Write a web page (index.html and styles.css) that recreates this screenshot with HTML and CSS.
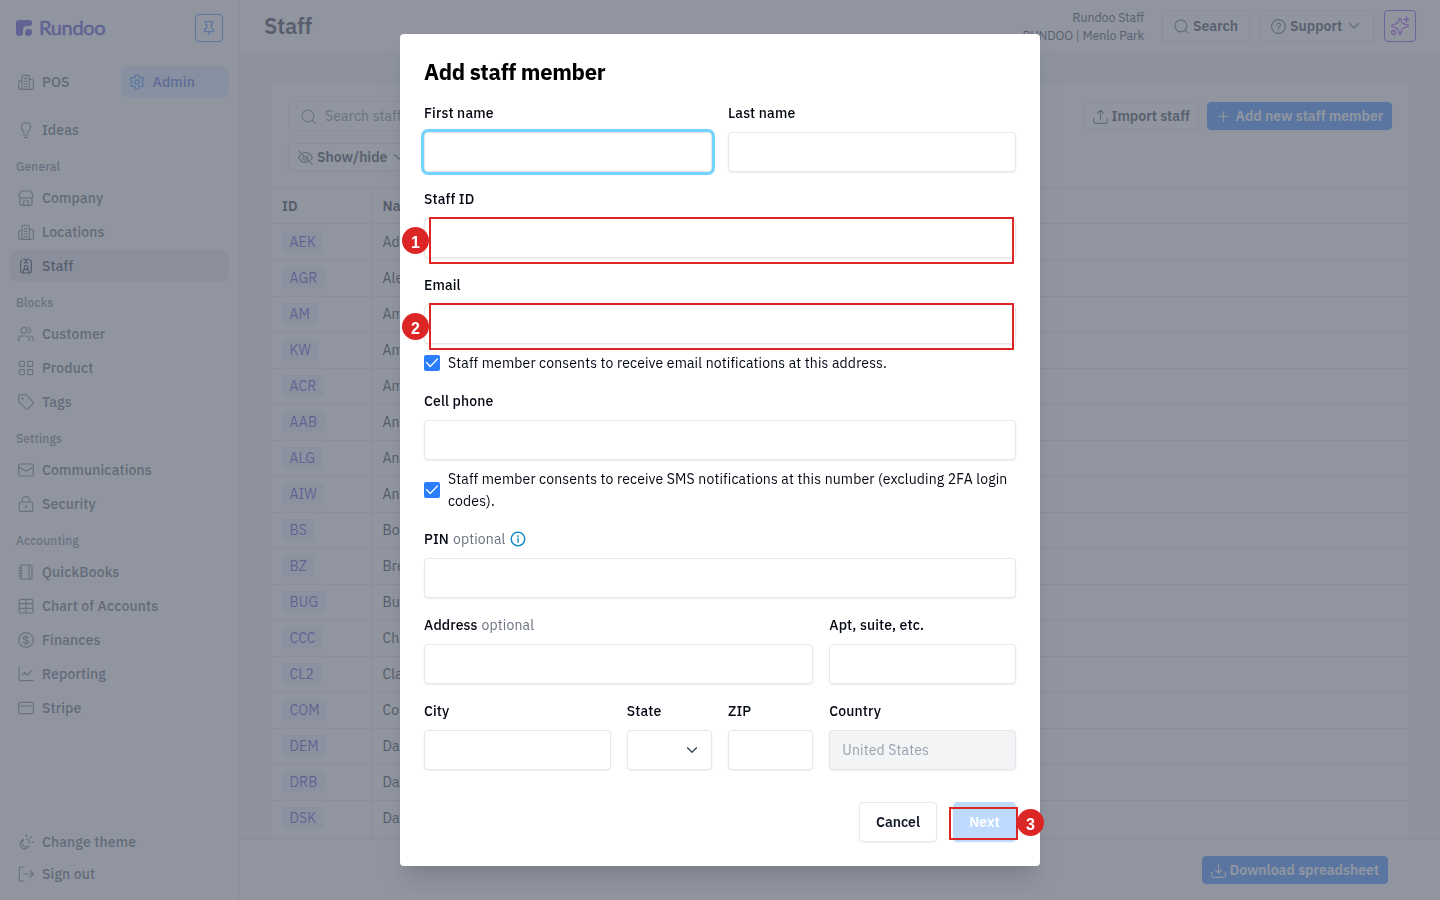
FILE: index.html
```html
<!DOCTYPE html>
<html lang="en">
<head>
<meta charset="utf-8">
<title>Add staff member</title>
<link rel="stylesheet" href="styles.css">
</head>
<body>
<div class="app">
  <aside class="sidebar">
    <div class="brand">
      <svg class="brand-mark" viewBox="0 0 16 16"><path d="M3 0h10.500a2.500 2.500 0 0 1 2.500 2.500v1a2.500 2.500 0 0 1-2.500 2.500H11a4 4 0 0 0-4 4V13a3 3 0 0 1-3 3H3a3 3 0 0 1-3-3V3a3 3 0 0 1 3-3z"/><circle cx="12.600" cy="12.500" r="3.500"/></svg>
      <span class="brand-name">Rundoo</span>
      <span class="pin"><svg viewBox="0 0 24 24"><path d="M6.500 2.500h11v3l-2 1.500v5l3.500 2.500V17.500H5v-3L8.500 12V7l-2-1.500zM12 17.500v5"/></svg></span>
    </div>
    <div class="modes">
      <a class="item"><svg viewBox="0 0 24 24"><path d="M6 23V4a2 2 0 0 1 2-2h7a2 2 0 0 1 2 2v19M1 21V12a2 2 0 0 1 2-2h3M17 8h3a3 3 0 0 1 3 3v10a2 2 0 0 1-2 2H3a2 2 0 0 1-2-2M9.500 7h4M9.500 11h4M9.500 15h4M9.500 19h4"/></svg>POS</a>
      <a class="item item-mode"><svg viewBox="0 0 24 24"><circle cx="12" cy="12" r="3.200"/><path d="M10 1.500h4l.8 3.200 2.200 1.300 3.200-1 2 3.500-2.400 2.300v2.400l2.400 2.300-2 3.500-3.200-1-2.200 1.300-.8 3.200h-4l-.8-3.200L7 18l-3.200 1-2-3.500 2.400-2.300v-2.400L1.800 8.500l2-3.500L7 6l2.200-1.300z"/></svg>Admin</a>
    </div>
    <nav class="nav">
      <a class="item"><svg viewBox="0 0 24 24"><path d="M9 17v-2.500C6.500 13 5 11 5 8a7 7 0 0 1 14 0c0 3-1.500 5-4 6.500V17M8.500 19.500h7M10 23h4"/></svg>Ideas</a>
      <h3 class="group">General</h3>
      <a class="item"><svg viewBox="0 0 24 24"><path d="M3 12v8a3 3 0 0 0 3 3h12a3 3 0 0 0 3-3v-8M5.500 1.500h13L22.500 7v2a3 3 0 0 1-5.200 2 3.500 3.500 0 0 1-5.300 0 3.500 3.500 0 0 1-5.300 0A3 3 0 0 1 1.500 9V7zM8.500 23v-6.500h7V23"/></svg>Company</a>
      <a class="item"><svg viewBox="0 0 24 24"><path d="M6 23V4a2 2 0 0 1 2-2h7a2 2 0 0 1 2 2v19M1 21V12a2 2 0 0 1 2-2h3M17 8h3a3 3 0 0 1 3 3v10a2 2 0 0 1-2 2H3a2 2 0 0 1-2-2M9.500 7h4M9.500 11h4M9.500 15h4M9.500 19h4"/></svg>Locations</a>
      <a class="item item-active"><svg viewBox="0 0 24 24"><path d="M7 3h-.5a2.500 2.500 0 0 0-2.500 2.500v14.500a2.500 2.500 0 0 0 2.500 2.500h11a2.500 2.500 0 0 0 2.500-2.500V5.500a2.500 2.500 0 0 0-2.500-2.500H17M9 1l3 3.500L15 1M9.500 7h5M7.500 22v-2a2.500 2.500 0 0 1 2.500-2.500h4a2.500 2.500 0 0 1 2.500 2.500v2"/><circle cx="12" cy="14.300" r="2.800"/></svg>Staff</a>
      <h3 class="group">Blocks</h3>
      <a class="item"><svg viewBox="0 0 24 24"><circle cx="9" cy="6.500" r="4.500"/><path d="M1 22v-2a5 5 0 0 1 5-5h6a5 5 0 0 1 5 5v2M15.500 2.200a4.500 4.500 0 0 1 0 8.600M19 15.300a5 5 0 0 1 4 4.700v2"/></svg>Customer</a>
      <a class="item"><svg viewBox="0 0 24 24"><rect x="2" y="2" width="7.500" height="7.500" rx="1"/><rect x="14.500" y="2" width="7.500" height="7.500" rx="1"/><rect x="2" y="14.500" width="7.500" height="7.500" rx="1"/><rect x="14.500" y="14.500" width="7.500" height="7.500" rx="1"/></svg>Product</a>
      <a class="item"><svg viewBox="0 0 24 24"><path d="M1 3.500V11l11 11.300a2 2 0 0 0 2.800 0l7.700-7.700a2 2 0 0 0 0-2.800L12 1H3.500A2.500 2.500 0 0 0 1 3.500z"/><circle cx="6.800" cy="6.800" r=".8"/></svg>Tags</a>
      <h3 class="group">Settings</h3>
      <a class="item"><svg viewBox="0 0 24 24"><rect x="1" y="3" width="22" height="18" rx="2"/><path d="M1 7l9.500 6a3 3 0 0 0 3 0L23 7"/></svg>Communications</a>
      <a class="item"><svg viewBox="0 0 24 24"><rect x="2" y="9" width="20" height="14" rx="2"/><path d="M6.500 9V6.500a5.500 5.500 0 0 1 11 0V9"/><circle cx="12" cy="16" r="1"/></svg>Security</a>
      <h3 class="group">Accounting</h3>
      <a class="item"><svg viewBox="0 0 24 24"><rect x="4" y="1.500" width="17" height="21" rx="2"/><path d="M16.500 1.500v21M1 6h5M1 10h5M1 14h5M1 18h5"/></svg>QuickBooks</a>
      <a class="item"><svg viewBox="0 0 24 24"><rect x="1.800" y="2" width="20.500" height="20.500" rx="2"/><path d="M2 8.500h20M2 15.500h20M12 2v20"/></svg>Chart of Accounts</a>
      <a class="item"><svg viewBox="0 0 24 24"><circle cx="12" cy="12" r="11"/><path d="M16 9c-.5-1.500-2-2-4-2-2.500 0-4 .8-4 2.500C8 13.500 16 10.500 16 14.500c0 1.700-1.500 2.500-4 2.500-2 0-3.500-.5-4-2M12 5v14"/></svg>Finances</a>
      <a class="item"><svg viewBox="0 0 24 24"><path d="M1.500 1.500V20a2 2 0 0 0 2 2H23M6 14l4-4.500 4 4L20.500 7"/></svg>Reporting</a>
      <a class="item"><svg viewBox="0 0 24 24"><rect x="1" y="3.500" width="22" height="17" rx="2"/><path d="M1 9h22"/></svg>Stripe</a>
    </nav>
    <div class="side-foot">
      <a class="item"><svg viewBox="0 0 24 24"><path d="M8.500 8.500a7 7 0 1 0 8 9.500 6 6 0 0 1-8-9.500zM13 8a5 5 0 0 1 4 6M12.500 1v2.500M20 4l-1.800 1.800M21 12.500h2.500"/></svg>Change theme</a>
      <a class="item"><svg viewBox="0 0 24 24"><path d="M9 1.500H4a2 2 0 0 0-2 2v17a2 2 0 0 0 2 2h5M8 12h15M18 7l5 5-5 5"/></svg>Sign out</a>
    </div>
  </aside>
  <main class="main">
    <header class="topbar">
      <h1 class="page-title">Staff</h1>
      <div class="account">Rundoo Staff<br>RUNDOO | Menlo Park</div>
      <button class="btn btn-search"><svg viewBox="0 0 24 24"><circle cx="11" cy="11" r="9.500"/><path d="M17.800 17.800L22.500 22.500"/></svg>Search</button>
      <button class="btn btn-support"><svg viewBox="0 0 24 24"><circle cx="12" cy="12" r="11"/><path d="M9 9.500a3 3 0 1 1 4.500 2.600c-1 .6-1.500 1-1.500 2.200M12 17v.8"/></svg>Support<svg class="chev" viewBox="0 0 12 12"><path d="M1.500 3.500L6 8l4.500-4.500"/></svg></button>
      <button class="btn btn-ai"><svg viewBox="0 0 20 20"><path d="M10 2.500c.8 0 1 .6 1.200 1.500.6 3 1.300 3.700 4.300 4.300 1.500.3 3 .5 3 1.500s-1.500 1.200-3 1.500c-3 .6-3.700 1.300-4.300 4.300-.2 1.500-.5 3-1.200 3s-1-1.500-1.200-3c-.6-3-1.300-3.700-4.300-4.300-1.500-.3-3-.5-3-1.500s1.500-1.200 3-1.500c3-.6 3.700-1.300 4.300-4.300.2-.9.500-1.500 1.200-1.500zM16.500 1v5M14 3.500h5"/><circle cx="3.500" cy="16.500" r="2"/></svg></button>
    </header>
    <div class="content">
      <section class="card">
        <div class="tools">
          <div class="search"><svg viewBox="0 0 24 24"><circle cx="11" cy="11" r="9.500"/><path d="M17.800 17.800L22.500 22.500"/></svg>Search staff</div>
          <div class="tool-actions">
            <button class="btn btn-import"><svg viewBox="0 0 24 24"><path d="M1 15v5a3 3 0 0 0 3 3h16a3 3 0 0 0 3-3v-5M12 17V2M7 7l5-5 5 5"/></svg>Import staff</button>
            <button class="btn btn-blue btn-add"><svg viewBox="0 0 24 24"><path d="M12 4v16M4 12h16"/></svg>Add new staff member</button>
          </div>
        </div>
        <button class="btn btn-show"><svg viewBox="0 0 24 24"><path d="M1.500 1.500l21 21M9 4.500c6-1.800 11 2 14 7.500-.9 1.700-2 3.200-3.400 4.400M16 18.600C9.500 21.500 4 18 1 12c1.100-2.200 2.600-4 4.400-5.400M14 9a4 4 0 0 1 1.500 4M13 16a4 4 0 0 1-5-5"/></svg>Show/hide<svg class="chev" viewBox="0 0 12 12"><path d="M1.500 3.500L6 8l4.500-4.500"/></svg></button>
        <div class="table">
          <div class="row head"><div class="id">ID</div><div class="name">Name</div></div>
          <div class="row first"><div class="id"><span>AEK</span></div><div class="name">Ada</div></div>
          <div class="row"><div class="id"><span>AGR</span></div><div class="name">Alex</div></div>
          <div class="row"><div class="id"><span>AM</span></div><div class="name">Ama</div></div>
          <div class="row"><div class="id"><span>KW</span></div><div class="name">Amb</div></div>
          <div class="row"><div class="id"><span>ACR</span></div><div class="name">Amy</div></div>
          <div class="row"><div class="id"><span>AAB</span></div><div class="name">And</div></div>
          <div class="row"><div class="id"><span>ALG</span></div><div class="name">And</div></div>
          <div class="row"><div class="id"><span>AIW</span></div><div class="name">Ann</div></div>
          <div class="row"><div class="id"><span>BS</span></div><div class="name">Bob</div></div>
          <div class="row"><div class="id"><span>BZ</span></div><div class="name">Bren</div></div>
          <div class="row"><div class="id"><span>BUG</span></div><div class="name">Bug</div></div>
          <div class="row"><div class="id"><span>CCC</span></div><div class="name">Chr</div></div>
          <div class="row"><div class="id"><span>CL2</span></div><div class="name">Clar</div></div>
          <div class="row"><div class="id"><span>COM</span></div><div class="name">Com</div></div>
          <div class="row"><div class="id"><span>DEM</span></div><div class="name">Dan</div></div>
          <div class="row"><div class="id"><span>DRB</span></div><div class="name">Dav</div></div>
          <div class="row"><div class="id"><span>DSK</span></div><div class="name">Dav</div></div>
          <div class="row"><div class="id"></div></div>
        </div>
      </section>
    </div>
    <footer class="footer"><button class="btn btn-blue btn-download"><svg viewBox="0 0 24 24"><path d="M1 15v5a3 3 0 0 0 3 3h16a3 3 0 0 0 3-3v-5M12 1v15M7 11l5 5 5-5"/></svg>Download spreadsheet</button></footer>
  </main>
</div>

<div class="overlay">
  <form class="modal">
    <h2 class="modal-title">Add staff member</h2>
    <div class="fields">
      <div class="field w3"><label>First name</label><div class="input focused"></div></div>
      <div class="field w3"><label>Last name</label><div class="input"></div></div>
      <div class="field w6"><label>Staff ID</label><div class="input"></div></div>
      <div class="field w6"><label>Email</label><div class="input"></div>
        <div class="consent"><span class="check"><svg viewBox="0 0 16 16"><path d="M2.500 7.500L6.200 11.500 13.500 4"/></svg></span><p>Staff member consents to receive email notifications at this address.</p></div></div>
      <div class="field w6"><label>Cell phone</label><div class="input"></div>
        <div class="consent"><span class="check"><svg viewBox="0 0 16 16"><path d="M2.500 7.500L6.200 11.500 13.500 4"/></svg></span><p>Staff member consents to receive SMS notifications at this number (excluding 2FA login codes).</p></div></div>
      <div class="field w6"><label>PIN <em>optional</em><svg class="info" viewBox="0 0 16 16"><circle cx="8" cy="8" r="6.800"/><path d="M8 7.300v3.900M8 4.700v1.100"/></svg></label><div class="input"></div></div>
      <div class="field w4"><label>Address <em>optional</em></label><div class="input"></div></div>
      <div class="field w2"><label>Apt, suite, etc.</label><div class="input"></div></div>
      <div class="field w2"><label>City</label><div class="input"></div></div>
      <div class="field w1"><label>State</label><div class="input select"><svg viewBox="0 0 12 12"><path d="M1.500 3.800L6 8.300l4.500-4.500"/></svg></div></div>
      <div class="field w1"><label>ZIP</label><div class="input"></div></div>
      <div class="field w2"><label>Country</label><div class="input disabled">United States</div></div>
    </div>
    <div class="actions"><button type="button" class="btn btn-cancel">Cancel</button><button type="button" class="btn btn-next">Next</button></div>
  </form>
</div>

<div class="mark mark-1"><b>1</b></div>
<div class="mark mark-2"><b>2</b></div>
<div class="mark mark-3"><b>3</b></div>
</body>
</html>
```
FILE: styles.css
```css
* { box-sizing: border-box; }
body {
  margin: 0; width: 1440px; height: 900px; overflow: hidden;
  font: 400 14px/22px "IBM Plex Sans", Roboto, "Noto Sans", sans-serif;
  letter-spacing: .14px; color: #111827;
}
h1, h2, h3, p { margin: 0; }
button { font: inherit; letter-spacing: inherit; }
svg { fill: none; stroke: currentColor; stroke-width: 1.8; stroke-linecap: round; stroke-linejoin: round; flex: none; }

.app { display: flex; height: 900px; background: #fff; }

.sidebar { width: 240px; flex: none; border-right: 1px solid #e5e7eb; padding: 14px 10px 10px; display: flex; flex-direction: column; }
.brand { display: flex; align-items: center; height: 28px; padding: 0 6px; color: #4338ca; margin-bottom: 24px; }
.brand-mark { width: 16px; height: 16px; fill: currentColor; stroke: none; }
.brand-name { font: 400 20px/26px Lato, sans-serif; margin: -2px 0 0 7px; letter-spacing: -.35px; -webkit-text-stroke: .6px currentColor; }
.pin { margin-left: auto; width: 28px; height: 28px; border: 1px solid #2b7fff; border-radius: 4px; color: #2b7fff; display: grid; place-items: center; }
.pin svg { width: 16px; height: 16px; }
.modes { display: grid; grid-template-columns: 1fr 108px; gap: 2px; margin-bottom: 16px; }
.item { display: flex; align-items: center; height: 32px; padding: 0 8px; gap: 8px; border-radius: 8px; color: #4b5563; font-weight: 500; }
.item svg { width: 16px; height: 16px; color: #6b7280; }
.item-mode { background: #dbeafe; color: #3b5bdb; gap: 7.5px; }
.item-mode svg { color: #2b7fff; }
.item-active { background: #e5e7eb; color: #1f2937; }
.item-active svg { color: #111827; }
.nav { display: flex; flex-direction: column; gap: 2px; }
.group { height: 32px; margin: 0; padding: 4px 6px 0; line-height: 29px; font-size: 12px; font-weight: 500; color: #6b7280; letter-spacing: .12px; }
.side-foot { margin-top: auto; }

.main { flex: 1; display: flex; flex-direction: column; min-width: 0; }
.topbar { height: 53px; flex: none; border-bottom: 1px solid #e5e7eb; padding: 0 24px; display: flex; align-items: center; }
.page-title { font-size: 22px; font-weight: 600; color: #1f2937; letter-spacing: -.27px; }
.account { margin-left: auto; text-align: right; font-size: 12.5px; line-height: 18px; margin-right: 18px; letter-spacing: -.12px; color: #1f2937; }
.btn { display: flex; align-items: center; border: 1px solid #e5e7eb; border-radius: 4px; background: #fff; color: #1f2937; font-weight: 600; padding: 0 11px; gap: 4px; height: 28px; box-shadow: 0 1px 2px rgba(0,0,0,.05); white-space: nowrap; letter-spacing: 0; }
.btn svg { width: 15px; height: 15px; color: #4b5563; }
.btn .chev { width: 12px; height: 12px; stroke-width: 1.2; margin-left: 2px; }
.btn-search, .btn-support { height: 32px; }
.btn-search { width: 88px; margin-right: 10px; }
.btn-support { width: 114px; margin-right: 10px; padding: 0 10px; }
.btn-ai { width: 32px; height: 32px; padding: 0; justify-content: center; border-color: #7c3aed; }
.btn-ai svg { width: 20px; height: 20px; color: #9333ea; stroke-width: 1.3; }
.content { flex: 1; min-height: 0; overflow: hidden; background: #f3f4f6; padding: 32px 32px 0; }
.card { background: #fff; padding-top: 16px; }
.tools { display: flex; justify-content: space-between; align-items: center; padding: 0 16px; height: 30px; }
.search { width: 320px; height: 30px; border: 1px solid #e5e7eb; border-radius: 4px; display: flex; align-items: center; gap: 9px; padding: 0 12px; color: #6b7280; }
.search svg { width: 15px; height: 15px; }
.tool-actions { display: flex; gap: 8px; }
.btn-import { width: 116px; padding: 0 8.5px; }
.btn-blue { background: #2b7fff; border-color: #2b7fff; color: #fff; }
.btn-blue svg { color: #fff; }
.btn-add { width: 185px; gap: 5px; padding: 0 7.500px; }
.btn-show { margin: 12px 0 0 16px; padding: 0 9px; }
.table { margin-top: 16px; border-top: 1px solid #e5e7eb; }
.row { display: flex; height: 36px; border-bottom: 1px solid #e5e7eb; }
.id { width: 101px; padding: 0 0 1px 10px; border-right: 1px solid #e5e7eb; display: flex; align-items: center; }
.id span { background: #eef0fb; color: #4338ca; border-radius: 4px; height: 22px; padding: 0 7.500px; }
.name { padding: 0 0 1px 9.500px; display: flex; align-items: center; }
.head { font-weight: 600; }
.head > div { padding-bottom: 0; }
.first { height: 37px; }
.first > div { padding-bottom: 0; }
.footer { height: 60px; flex: none; display: flex; align-items: center; justify-content: flex-end; padding-right: 52px; box-shadow: 0 -1px 6px rgba(0,0,0,.08); }
.btn-download { width: 186px; padding: 0 7.500px; }

.overlay { position: fixed; inset: 0; background: rgba(107,114,128,.75); display: grid; place-items: center; }
.modal { width: 640px; height: 832px; background: #fff; border-radius: 4px; padding: 24px; box-shadow: 0 20px 25px -5px rgba(0,0,0,.1), 0 8px 10px -6px rgba(0,0,0,.1); }
.modal-title { font-size: 22px; line-height: 28px; font-weight: 700; color: #000; letter-spacing: -.32px; margin-bottom: 16px; }
.fields { display: grid; grid-template-columns: repeat(6, 1fr); gap: 16px; color: #030712; }
.w1 { grid-column: span 1; } .w2 { grid-column: span 2; } .w3 { grid-column: span 3; } .w4 { grid-column: span 4; } .w6 { grid-column: span 6; }
.field { display: flex; flex-direction: column; gap: 8px; }
label { font-weight: 500; display: flex; align-items: center; gap: 4px; height: 22px; }
label em { font-style: normal; font-weight: 400; color: #6b7280; }
.info { width: 16px; height: 16px; color: #0284c7; stroke-width: 1.3; }
.input { height: 40px; border: 1px solid #e5e7eb; border-radius: 4px; box-shadow: 0 1px 2px rgba(0,0,0,.07); background: #fff; }
.focused { box-shadow: 0 0 0 3px #74d4ff; }
.select { display: flex; align-items: center; justify-content: flex-end; padding-right: 13px; }
.select svg { width: 12px; height: 12px; stroke-width: 1.3; color: #374151; }
.disabled { background: #f3f4f6; color: #99a1af; padding: 0 12px; line-height: 38px; }
.consent { display: flex; align-items: center; gap: 8px; }
.check { width: 16px; height: 16px; background: #2b7fff; border-radius: 2px; color: #fff; flex: none; display: grid; }
.check svg { width: 16px; height: 16px; stroke-width: 1.2; }
.actions { display: flex; justify-content: flex-end; gap: 16px; margin-top: 32px; }
.btn-cancel, .btn-next { height: 40px; justify-content: center; padding: 0; color: #111827; }
.btn-cancel { width: 78px; }
.btn-next { width: 63px; background: #bedbff; border-color: #bedbff; color: #fff; }

.mark { position: absolute; border: 2px solid #dc2626; }
.mark b { position: absolute; width: 27px; height: 27px; border-radius: 50%; background: #dc2626; color: #fff; font: 700 16px/31px "Liberation Sans", sans-serif; text-align: center; letter-spacing: 0; }
.mark-1, .mark-2 { left: 429px; width: 585px; height: 47px; }
.mark-1 { top: 217px; }
.mark-2 { top: 303px; }
.mark-1 b, .mark-2 b { left: -29px; top: 8px; }
.mark-3 { left: 949px; top: 807px; width: 69px; height: 33px; }
.mark-3 b { left: 66px; top: 0; }
```
